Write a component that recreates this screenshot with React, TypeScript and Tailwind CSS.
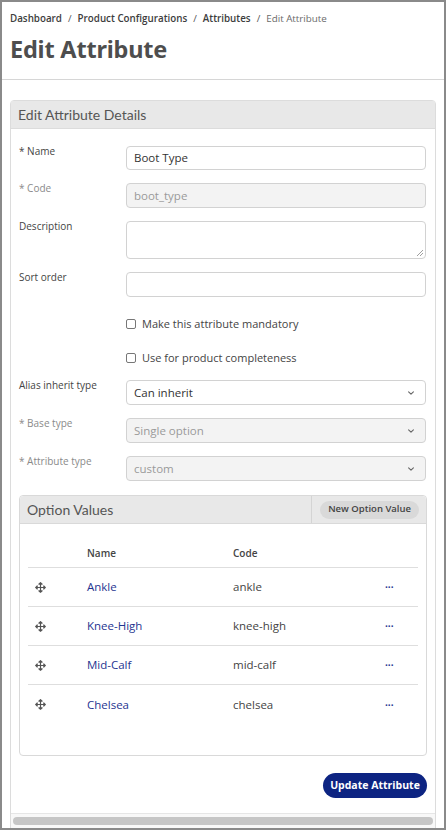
import { FaArrowsAlt } from "react-icons/fa";

const OPTIONS = [
  { name: "Ankle", code: "ankle" },
  { name: "Knee-High", code: "knee-high" },
  { name: "Mid-Calf", code: "mid-calf" },
  { name: "Chelsea", code: "chelsea" },
];

function Chevron() {
  return (
    <svg className="w-[8px] h-[8px] text-[#666]" viewBox="0 0 10 10" fill="none" stroke="currentColor" strokeWidth={1.4}>
      <path d="M2 3.5l3 3 3-3" strokeLinecap="round" strokeLinejoin="round" />
    </svg>
  );
}

function FieldRow({
  label,
  muted,
  children,
  className,
}: {
  label: string;
  muted?: boolean;
  children: React.ReactNode;
  className?: string;
}) {
  return (
    <div className={"flex items-start pr-px " + (className ?? "")}>
      <label
        className={
          "w-[107px] shrink-0 -mt-[2px] text-[10px] leading-[14px] " +
          (muted ? "text-[#8a8a8a]" : "text-[#444]")
        }
      >
        {label}
      </label>
      <div className="flex-1">{children}</div>
    </div>
  );
}

function SelectBox({ value, disabled }: { value: string; disabled?: boolean }) {
  return (
    <div
      className={
        "h-[25px] rounded-[4px] border border-[#d2d2d2] px-[7px] flex items-center justify-between text-[11.5px] " +
        (disabled ? "bg-[#f3f3f3] text-[#9a9a9a]" : "bg-white text-[#333]")
      }
    >
      <span>{value}</span>
      <span className="pr-[3px]">
        <Chevron />
      </span>
    </div>
  );
}

export default function App() {
  return (
    <div className="h-[830px] overflow-hidden border-2 border-[#8a8a8a] bg-white font-['Open_Sans',sans-serif] text-[#444]">
      {/* Header */}
      <div className="h-[78px] border-b border-[#d6d6d6] px-[8px] pt-[10px]">
        <nav className="flex items-center gap-[6px] text-[9.8px] leading-[14px]">
          <span className="font-semibold text-[#3d3d3d]">Dashboard</span>
          <span className="text-[#555]">/</span>
          <span className="font-semibold text-[#3d3d3d]">Product Configurations</span>
          <span className="text-[#555]">/</span>
          <span className="font-semibold text-[#3d3d3d]">Attributes</span>
          <span className="text-[#555]">/</span>
          <span className="text-[#6a6a6a]">Edit Attribute</span>
        </nav>
        <h1 className="mt-[8px] text-[23.5px] leading-[30px] font-bold tracking-[-0.2px] text-[#4e4e4e] font-['Noto_Sans',sans-serif]">
          Edit Attribute
        </h1>
      </div>

      {/* Content */}
      <div className="px-[8px] pt-[20px]">
        <div className="rounded-t-[4px] border border-[#dcdcdc]">
          <div className="h-[28px] bg-[#e8e8e8] border-b border-[#dcdcdc] px-[7px] flex items-center text-[14px] text-[#555] font-['Lato',sans-serif]">
            Edit Attribute Details
          </div>

          <div className="px-[8px] pt-[17px] pb-[15px]">
            <FieldRow label="* Name" className="mb-[13px]">
              <div className="h-[24px] rounded-[4px] border border-[#d2d2d2] bg-white px-[7px] flex items-center text-[11.5px] text-[#333]">
                Boot Type
              </div>
            </FieldRow>
            <FieldRow label="* Code" muted className="mb-[13px]">
              <div className="h-[25px] rounded-[4px] border border-[#d2d2d2] bg-[#f3f3f3] px-[7px] flex items-center text-[11.5px] text-[#9a9a9a]">
                boot_type
              </div>
            </FieldRow>
            <FieldRow label="Description" className="mb-[13px]">
              <div className="relative h-[38px] rounded-[4px] border border-[#d2d2d2] bg-white">
                <svg className="absolute right-[2px] bottom-[2px] w-[6px] h-[6px] text-[#888]" viewBox="0 0 6 6" stroke="currentColor" strokeWidth={0.8}>
                  <path d="M6 0L0 6M6 3L3 6" />
                </svg>
              </div>
            </FieldRow>
            <FieldRow label="Sort order">
              <div className="h-[25px] rounded-[4px] border border-[#d2d2d2] bg-white" />
            </FieldRow>

            <div className="ml-[107px] mt-[17px] flex flex-col gap-[14px]">
              <label className="h-[20px] flex items-center gap-[6px] text-[11px] text-[#444]">
                <span className="w-[10px] h-[10px] rounded-[2px] border border-[#777] bg-white" />
                Make this attribute mandatory
              </label>
              <label className="h-[20px] flex items-center gap-[6px] text-[11px] text-[#444]">
                <span className="w-[10px] h-[10px] rounded-[2px] border border-[#777] bg-white" />
                Use for product completeness
              </label>
            </div>

            <FieldRow label="Alias inherit type" className="mt-[12px] mb-[13px]">
              <SelectBox value="Can inherit" />
            </FieldRow>
            <FieldRow label="* Base type" muted className="mb-[13px]">
              <SelectBox value="Single option" disabled />
            </FieldRow>
            <FieldRow label="* Attribute type" muted>
              <SelectBox value="custom" disabled />
            </FieldRow>

            {/* Option values */}
            <div className="mt-[14px] rounded-[4px] border border-[#d9d9d9]">
              <div className="h-[28px] bg-[#e8e8e8] border-b border-[#d9d9d9] flex items-center rounded-t-[4px]">
                <div className="flex-1 px-[7px] text-[14px] text-[#555] font-['Lato',sans-serif]">
                  Option Values
                </div>
                <div className="h-full border-l border-[#d4d4d4] flex items-center pl-[8px] pr-[7px]">
                  <button className="h-[18px] rounded-full bg-[#d9d9d9] px-[8px] text-[9.5px] font-semibold text-[#444]">
                    New Option Value
                  </button>
                </div>
              </div>

              <div className="px-[8px] pt-[16px] pb-[31px]">
                <div className="flex items-center h-[28px] border-b border-[#dedede] text-[10px] font-semibold text-[#444]">
                  <div className="w-[59px]" />
                  <div className="w-[146px]">Name</div>
                  <div className="flex-1">Code</div>
                </div>
                {OPTIONS.map((o, i) => (
                  <div
                    key={o.code}
                    className={
                      "flex items-center h-[39px] text-[11.5px] " +
                      (i < OPTIONS.length - 1 ? "border-b border-[#dedede]" : "")
                    }
                  >
                    <div className="w-[59px] pl-[7px]">
                      <FaArrowsAlt className="w-[11px] h-[11px] text-[#555]" />
                    </div>
                    <div className="w-[146px] text-[#1f3590]">{o.name}</div>
                    <div className="flex-1 text-[#444]">{o.code}</div>
                    <div className="w-[40px] pl-[7px] text-[#1f3590] text-[10px] leading-none font-bold">
                      ···
                    </div>
                  </div>
                ))}
              </div>
            </div>

            <div className="mt-[17px] flex justify-end">
              <button className="h-[25px] w-[104px] rounded-full bg-[#0d2482] text-[10.5px] font-bold text-white">
                Update Attribute
              </button>
            </div>
          </div>

          {/* horizontal scrollbar */}
          <div className="border-t border-[#e6e6e6] bg-[#f8f8f8] px-[2px] pt-[3px] pb-[6px]">
            <div className="h-[8px] rounded-full bg-[#c6c6c6]" />
          </div>
        </div>
      </div>
    </div>
  );
}
